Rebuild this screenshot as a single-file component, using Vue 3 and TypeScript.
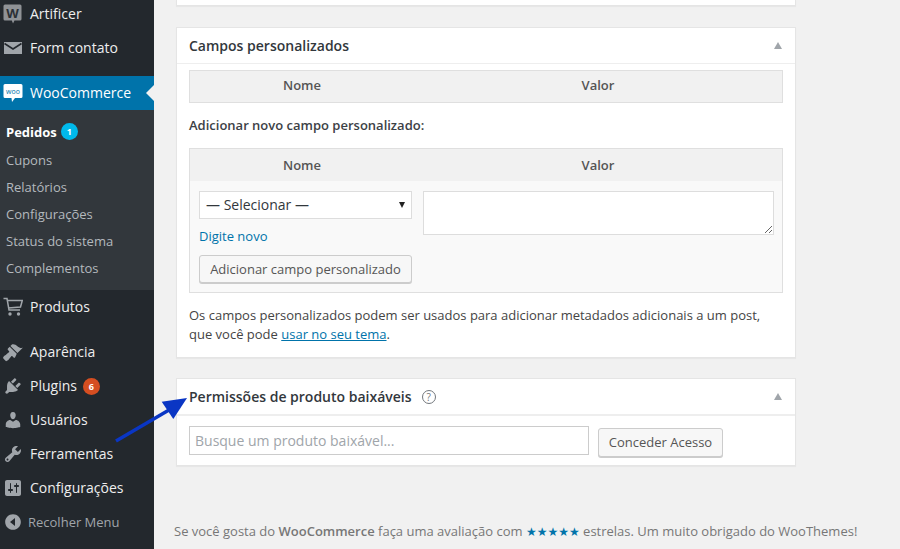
<script setup lang="ts">
interface SubItem { label: string; current?: boolean; badge?: string }
const submenu: SubItem[] = [
  { label: 'Pedidos', current: true, badge: '1' },
  { label: 'Cupons' },
  { label: 'Relatórios' },
  { label: 'Configurações' },
  { label: 'Status do sistema' },
  { label: 'Complementos' },
]
</script>

<template>
  <div class="page">
    <aside class="sidebar">
      <a class="item">
        <svg class="ico" viewBox="0 0 20 20"><path d="M2 .5h15a1.500 1.500 0 0 1 1.500 1.500v13a1.500 1.500 0 0 1-1.500 1.500h-5.500L10 19.500l-1.200-3H2A1.500 1.500 0 0 1 .5 15V2A1.500 1.500 0 0 1 2 .5z" fill="#8f9296"/><text x="9.500" y="13.500" text-anchor="middle" class="w">W</text></svg>
        <span>Artificer</span>
      </a>
      <a class="item">
        <svg class="ico" viewBox="0 0 20 20"><path d="M1 4h18v12H1z" fill="#a0a5aa"/><path d="M1.500 5.500L10 11l8.500-5.500" fill="none" stroke="#23282d" stroke-width="1.600"/></svg>
        <span>Form contato</span>
      </a>
      <a class="item active">
        <svg class="ico" viewBox="0 0 20 20"><path d="M2 1h16a1.500 1.500 0 0 1 1.500 1.500v11a1.500 1.500 0 0 1-1.500 1.500h-6L9 19l-.5-4H2A1.500 1.500 0 0 1 .5 13.500v-11A1.500 1.500 0 0 1 2 1z" fill="#fff"/><text x="10" y="10.500" text-anchor="middle" class="woo">woo</text></svg>
        <span>WooCommerce</span>
      </a>
      <ul class="submenu">
        <li v-for="s in submenu" :key="s.label" :class="{ current: s.current }">
          {{ s.label }}<span v-if="s.badge" class="count blue">{{ s.badge }}</span>
        </li>
      </ul>
      <a class="item">
        <svg class="ico" viewBox="0 0 20 20" fill="none" stroke="#a0a5aa" stroke-width="1.500"><path d="M.5 1.500h3.500l2 11.500h11M4.300 3.500h15l-1.800 6.500L5.200 11"/><circle cx="7" cy="17" r="1.700" fill="#a0a5aa" stroke="none"/><circle cx="15.500" cy="17" r="1.700" fill="#a0a5aa" stroke="none"/></svg>
        <span>Produtos</span>
      </a>
      <a class="item gap">
        <svg class="ico" viewBox="0 0 20 20"><path fill="#a0a5aa" d="M14.480 11.060L7.410 3.990l1.500-1.500c.5-.56 2.300-.47 3.510.32 1.210.8 1.430 1.280 2.910 2.100 1.180.64 2.450 1.260 4.450.85zm-.71.71L6.700 4.700 4.930 6.470c-.39.39-.39 1.020 0 1.410l1.060 1.060c.39.39.39 1.030 0 1.420-.6.6-1.430 1.110-2.210 1.690-.35.26-.7.53-1.010.84C1.430 13.230 0 14.660 0 16.070 1 17.500 2 18.500 3.060 19.200c1.360 0 2.530-1.260 3.400-2.580.58-.78 1.090-1.610 1.690-2.210.39-.39 1.030-.39 1.420 0l1.060 1.060c.39.39 1.020.39 1.410 0z"/></svg>
        <span>Aparência</span>
      </a>
      <a class="item">
        <svg class="ico" viewBox="0 0 20 20"><path fill="#a0a5aa" d="M13.110 4.360L9.870 7.600 8 5.730l3.240-3.240c.35-.34 1.050-.2 1.560.32.52.51.66 1.210.31 1.550zm-8 1.770l.91-1.120 9.010 9.010-1.190.84c-.71.71-2.630 1.160-3.820 1.160H6.140L4.900 17.260c-.59.59-1.540.59-2.120 0-.59-.58-.59-1.530 0-2.120l1.240-1.240v-3.880c0-1.130.4-3.190 1.090-3.890zm7.260 3.970l3.240-3.240c.34-.35 1.040-.21 1.550.31.52.51.66 1.210.31 1.550l-3.240 3.250z"/></svg>
        <span>Plugins</span><span class="count orange">6</span>
      </a>
      <a class="item">
        <svg class="ico" viewBox="0 0 20 20"><path fill="#a0a5aa" d="M10 9.250c-2.270 0-2.730-3.440-2.730-3.440C7 4.020 7.820 2 9.970 2c2.160 0 2.980 2.020 2.710 3.810 0 0-.41 3.440-2.680 3.440zm0 2.570L12.720 10c2.390 0 4.520 2.330 4.520 4.530v2.490s-3.650 1.130-7.240 1.130c-3.650 0-7.240-1.130-7.240-1.130v-2.490c0-2.250 1.940-4.480 4.470-4.480z"/></svg>
        <span>Usuários</span>
      </a>
      <a class="item">
        <svg class="ico" viewBox="0 0 20 20"><path fill="#a0a5aa" fill-rule="evenodd" d="M16.680 9.770c-1.340 1.340-3.300 1.670-4.950.99l-5.410 6.520c-.99.99-2.590.99-3.580 0s-.99-2.590 0-3.570l6.520-5.420c-.68-1.650-.35-3.610.99-4.950 1.280-1.280 3.120-1.620 4.720-1.060l-2.890 2.890 2.820 2.820 2.860-2.870c.53 1.580.18 3.390-1.080 4.670zM3.810 16.210c.4.39 1.040.39 1.430 0 .4-.4.4-1.040 0-1.430-.39-.4-1.030-.4-1.430 0-.39.39-.39 1.030 0 1.430z"/></svg>
        <span>Ferramentas</span>
      </a>
      <a class="item">
        <svg class="ico" viewBox="0 0 20 20"><path fill="#a0a5aa" fill-rule="evenodd" d="M18 16V4c0-1.100-.9-2-2-2H4c-1.100 0-2 .9-2 2v12c0 1.100.9 2 2 2h12c1.100 0 2-.9 2-2zM8 11h1c.55 0 1 .45 1 1s-.45 1-1 1H8v1.500c0 .28-.22.5-.5.5s-.5-.22-.5-.5V13H6c-.55 0-1-.45-1-1s.45-1 1-1h1V5.500c0-.28.22-.5.5-.5s.5.22.5.5V11zm5-2h-1c-.55 0-1-.45-1-1s.45-1 1-1h1V5.500c0-.28.22-.5.5-.5s.5.22.5.5V7h1c.55 0 1 .45 1 1s-.45 1-1 1h-1v5.500c0 .28-.22.5-.5.5s-.5-.22-.5-.5V9z"/></svg>
        <span>Configurações</span>
      </a>
      <a class="item collapse">
        <svg class="ico" viewBox="0 0 20 20"><path fill="#a0a5aa" fill-rule="evenodd" d="M10 2.160c4.330 0 7.840 3.510 7.840 7.840s-3.510 7.840-7.840 7.840S2.160 14.330 2.160 10 5.670 2.160 10 2.160zM12 14V6l-5 4z"/></svg>
        <span>Recolher Menu</span>
      </a>
    </aside>

    <main class="content">
      <section class="box first"></section>

      <section class="box">
        <header class="box-head">
          <h2>Campos personalizados</h2>
          <span class="toggle"></span>
        </header>
        <div class="box-body custom">
          <div class="list-head">
            <span class="c-name">Nome</span>
            <span class="c-value">Valor</span>
          </div>
          <p class="add-title">Adicionar novo campo personalizado:</p>
          <div class="form-table">
            <div class="list-head inner">
              <span class="c-name">Nome</span>
              <span class="c-value">Valor</span>
            </div>
            <div class="form-row">
              <div class="form-left">
                <select class="sel"><option>— Selecionar —</option></select>
                <a class="link new">Digite novo</a>
                <button class="btn wide">Adicionar campo personalizado</button>
              </div>
              <textarea class="ta"></textarea>
            </div>
          </div>
          <p class="note">Os campos personalizados podem ser usados para adicionar metadados adicionais a um post, que você pode <a class="link under">usar no seu tema</a>.</p>
        </div>
      </section>

      <section class="box">
        <header class="box-head thick">
          <h2>Permissões de produto baixáveis</h2>
          <span class="help">?</span>
          <span class="toggle"></span>
        </header>
        <div class="box-body grant">
          <input class="search" placeholder="Busque um produto baixável..." />
          <button class="btn">Conceder Acesso</button>
        </div>
      </section>

      <footer class="foot">
        Se você gosta do <strong>WooCommerce</strong> faça uma avaliação com <span class="stars">★★★★★</span> estrelas. Um muito obrigado do WooThemes!
      </footer>
    </main>

    <svg class="arrow" viewBox="0 0 80 50" width="80" height="50">
      <path d="M1 48L54 17" stroke="#0a36c4" stroke-width="3.500" fill="none"/>
      <path d="M72 5L46.700 8.700 58.300 26z" fill="#0a36c4"/>
    </svg>
  </div>
</template>

<style>
html, body { margin: 0; background: #f1f1f1; }
</style>

<style scoped>
.page {
  position: relative;
  display: flex;
  width: 900px;
  height: 549px;
  overflow: hidden;
  background: #f1f1f1;
  font-family: "Open Sans", sans-serif;
  font-size: 13px;
  color: #444;
}
.sidebar {
  flex: 0 0 154px;
  box-sizing: border-box;
  margin-top: -3px;
  height: 552px;
  background: #23282d;
  display: flex;
  flex-direction: column;
}
.item {
  position: relative;
  display: flex;
  align-items: center;
  box-sizing: border-box;
  flex: 0 0 34px;
  padding-left: 3px;
  font-size: 14px;
  color: #eee;
}
.item span:not(.count) { position: relative; top: -1px; }
.item.collapse span { top: 0; }
.item .ico { width: 20px; height: 20px; margin-right: 7px; flex: none; }
.item:nth-child(2) { margin-bottom: 11px; }
.item.active { background: #0073aa; color: #fff; }
.item.active::after {
  content: "";
  position: absolute;
  right: 0;
  top: 9px;
  border: 8px solid transparent;
  border-right-color: #f1f1f1;
  border-left-width: 0;
}
.w { font: 700 13px "Open Sans", sans-serif; fill: #2b3035; }
.woo { font: 400 7px "Open Sans", sans-serif; fill: #0073aa; }
.item.gap { margin-top: 11px; }
.item.collapse { font-size: 13px; color: #a0a5aa; }
.item.collapse .ico { margin-right: 5px; }
.submenu {
  margin: 0;
  padding: 7px 0;
  list-style: none;
  background: #32373c;
  flex: 0 0 180px;
  box-sizing: border-box;
}
.submenu li {
  display: flex;
  align-items: center;
  height: 27px;
  padding-left: 6px;
  color: #b4b9be;
}
.submenu li.current { height: 29px; color: #fff; font-weight: 700; }
.count {
  display: inline-flex;
  align-items: center;
  justify-content: center;
  width: 17px;
  height: 17px;
  border-radius: 50%;
  margin-left: 4px;
  font-size: 9px;
  font-weight: 700;
  color: #fff;
}
.blue { background: #00b9eb; }
.orange { background: #d54e21; margin-left: 6px; }

.content {
  flex: 0 0 620px;
  min-width: 0;
  margin-left: 22px;
  display: flex;
  flex-direction: column;
  align-self: flex-start;
}
.box {
  box-sizing: border-box;
  background: #fff;
  border: 1px solid #e5e5e5;
  box-shadow: 0 1px 1px rgba(0,0,0,.04);
  margin-bottom: 20px;
}
.first { height: 6px; margin-bottom: 21px; border-top: 0; }
.box-head {
  display: flex;
  align-items: center;
  box-sizing: border-box;
  height: 36px;
  padding: 0 12px;
  border-bottom: 1px solid #eee;
}
.box-head.thick { border-bottom-width: 2px; height: 37px; }
.box-head h2 {
  margin: 0;
  font-size: 14px;
  font-weight: 600;
  color: #32373c;
}
.help {
  box-sizing: border-box;
  width: 14px;
  height: 14px;
  margin-left: 10px;
  border: 1px solid #72777c;
  border-radius: 50%;
  font-size: 10px;
  line-height: 12px;
  text-align: center;
  color: #72777c;
}
.toggle {
  margin-left: auto;
  margin-right: 1px;
  border: 4.500px solid transparent;
  border-bottom: 7px solid #a0a5aa;
  border-top: 0;
}
.custom { padding: 6px 12px 0; height: 293px; box-sizing: border-box; }
.list-head {
  display: flex;
  align-items: center;
  box-sizing: border-box;
  height: 33px;
  padding-bottom: 4px;
  background: #f1f1f1;
  border: 1px solid #dfdfdf;
  font-weight: 600;
  color: #555;
}
.list-head.inner { border: 0; height: 32px; padding-bottom: 0; }
.c-name { width: 224px; text-align: center; }
.c-value { width: 368px; text-align: center; }
.add-title { margin: 13px 0 14px; font-weight: 600; color: #3c4146; line-height: 18px; }
.form-table { background: #f9f9f9; border: 1px solid #dfdfdf; height: 145px; box-sizing: border-box; }
.form-row { display: flex; padding: 10px 8px 0 9px; gap: 11px; }
.form-left { display: flex; flex-direction: column; width: 213px; flex: none; }
.sel {
  appearance: none;
  height: 28px;
  width: 213px;
  box-sizing: border-box;
  background: #fff url("data:image/svg+xml,%3Csvg xmlns='http://www.w3.org/2000/svg' width='6' height='6'%3E%3Cpath d='M0 0h6L3 6z' fill='%23222'/%3E%3C/svg%3E") no-repeat 199px 10px;
  border: 1px solid #ddd;
  font: 14px "Open Sans", sans-serif;
  color: #32373c;
  padding: 0 6px 2px;
  border-radius: 0;
}
.new { margin-top: 8px; line-height: 18px; }
.link { color: #0073aa; }
.under { text-decoration: underline; }
.btn {
  box-sizing: border-box;
  height: 29px;
  padding: 0 10px 1px;
  background: #f7f7f7;
  border: 1px solid #ccc;
  border-radius: 3px;
  box-shadow: 0 1px 0 #ccc;
  font: 13px "Open Sans", sans-serif;
  color: #555;
}
.btn.wide { margin-top: 10px; width: 213px; padding: 0 0 1px; height: 28px; }
.ta {
  flex: none;
  box-sizing: border-box;
  width: 351px;
  height: 44px;
  background: #fff;
  border: 1px solid #ddd;
  margin: 0;
}
.note { margin: 13px 0 0; line-height: 19px; color: #444; }
.grant { display: flex; align-items: flex-start; height: 49px; box-sizing: border-box; padding: 10px 12px 0; gap: 9px; }
.search {
  box-sizing: border-box;
  width: 400px;
  height: 29px;
  padding: 0 5px;
  background: #fff;
  border: 1px solid #ccc;
  font: 14px "Open Sans", sans-serif;
  outline: 0;
}
.search::placeholder { color: #a0a5aa; opacity: 1; }
.grant .btn { margin-top: 2px; width: 125px; padding: 0 0 2px; }
.foot {
  margin: 36px 0 0 -2px;
  width: 720px;
  white-space: nowrap;
  color: #777;
}
.foot strong { font-weight: 600; }
.stars { color: #0073aa; font-family: "DejaVu Sans", sans-serif; font-size: 12px; }
.arrow { position: absolute; left: 115px; top: 393px; }
</style>
